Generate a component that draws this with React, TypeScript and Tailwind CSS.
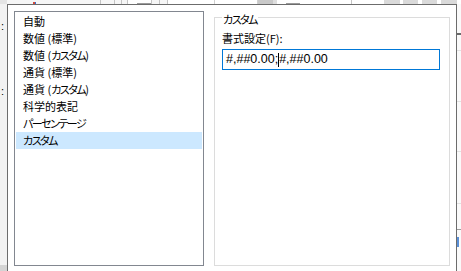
const jp = "font-['Noto_Sans_CJK_JP','Noto_Sans',sans-serif] [font-feature-settings:'palt']";

const items = [
  "自動",
  "数値 (標準)",
  "数値 (カスタム)",
  "通貨 (標準)",
  "通貨 (カスタム)",
  "科学的表記",
  "パーセンテージ",
  "カスタム",
];

// katakana in the original UI font is narrow, so tighten kana runs
function Jp({ text }: { text: string }) {
  const parts = text.split(/([\u30A0-\u30FF]+)/);
  return (
    <>
      {parts.map((p, i) =>
        /[\u30A0-\u30FF]/.test(p) ? (
          <span key={i} className="tracking-[-1.5px]">
            {p}
          </span>
        ) : (
          <span key={i}>{p}</span>
        )
      )}
    </>
  );
}

// spreadsheet cells peeking out above the dialog
const topCells: { w: number; cls: string }[] = [
  { w: 7, cls: "bg-[#e4e4e4]" },
  { w: 94, cls: "bg-[#f6f6f6] border-r border-[#c4c4c4]" },
  { w: 14, cls: "bg-[#f6f6f6] border-r border-[#c4c4c4]" },
  { w: 7, cls: "bg-[#f6f6f6] border-r border-[#c4c4c4]" },
  { w: 6, cls: "bg-[#f6f6f6] border-r border-[#c4c4c4]" },
  { w: 24, cls: "bg-white border-r border-[#c4c4c4]" },
  { w: 8, cls: "bg-[#f6f6f6] border-r border-[#c4c4c4]" },
  { w: 8, cls: "bg-[#f6f6f6] border-r border-[#c4c4c4]" },
  { w: 47, cls: "bg-white border-r border-[#d0d0d0]" },
  { w: 43, cls: "bg-white border-r border-[#d0d0d0]" },
  { w: 15, cls: "bg-[#c9c9c9]" },
  { w: 4, cls: "bg-[#dedede]" },
  { w: 75, cls: "bg-white border-r border-[#c4c4c4]" },
  { w: 32, cls: "bg-white" },
  { w: 16, cls: "bg-[#dadada]" },
  { w: 3, cls: "bg-white" },
  { w: 15, cls: "bg-[#dadada]" },
  { w: 4, cls: "bg-white" },
  { w: 15, cls: "bg-[#dadada]" },
  { w: 4, cls: "bg-white" },
  { w: 16, cls: "bg-[#dadada]" },
];

function TopStrip() {
  return (
    <div className="flex h-[4px] shrink-0">
      {topCells.map((c, i) => (
        <div key={i} className={`relative h-full shrink-0 ${c.cls}`} style={{ width: c.w }}>
          {i === 1 && (
            <div className="absolute bottom-0 left-[26px] flex">
              <div className="h-[2px] w-[2px] bg-[#d24b3a]" />
              <div className="h-[2px] w-px bg-[#3b6fd0]" />
            </div>
          )}
          {(i === 5 || i === 12) && (
            <div className="absolute bottom-0 left-[9px] h-px w-[14px] bg-[#9a9a9a]" />
          )}
        </div>
      ))}
    </div>
  );
}

function LeftStrip() {
  return (
    <div className="flex w-[7px] shrink-0 flex-col bg-[#f2f2f2]">
      <div className="mt-[16px] h-[12px] pl-px text-[11px] leading-[12px] text-black font-['Liberation_Sans',sans-serif]">:</div>
      <div className="mt-[53px] h-[12px] pl-px text-[11px] leading-[12px] text-black font-['Liberation_Sans',sans-serif]">:</div>
      <div className="mt-auto h-[6px] bg-[#d4d4d4]" />
    </div>
  );
}

function RightStrip() {
  return (
    <div className="flex w-[4px] shrink-0 flex-col bg-[#fafafa]">
      <div className="h-[29px]" />
      <div className="h-[2px] bg-[#6a6a6a]" />
      <div className="h-[16px] border-b border-[#e2e2e2]" />
      <div className="h-[51px] border-b border-[#e2e2e2]" />
      <div className="h-[50px] border-b border-[#e2e2e2]" />
      <div className="h-[52px] border-b border-[#e2e2e2]" />
      <div className="h-[26px] border-b border-[#9c9c9c]" />
      <div className="mt-[7px] h-[10px] w-[2px] bg-[#5a8fd6]" />
    </div>
  );
}

export default function App() {
  return (
    <div className={`flex h-[271px] w-[461px] flex-col overflow-hidden bg-white text-black ${jp}`}>
      <TopStrip />
      <div className="flex flex-1">
        <LeftStrip />

        {/* dialog */}
        <div className="flex w-[450px] shrink-0 items-start gap-[10px] border-l border-r border-t border-[#6c6c6c] bg-white pl-[6px] pt-[4px]">
          {/* category list */}
          <div className="mt-[2px] h-[255px] w-[190px] shrink-0 border border-[#828790] p-px">
            {items.map((t) => (
              <div
                key={t}
                className={`flex h-[17px] items-center whitespace-pre pl-[7px] text-[11px] leading-none ${
                  t === "カスタム" ? "bg-[#cce8ff]" : ""
                }`}
              >
                <Jp text={t} />
              </div>
            ))}
          </div>

          {/* custom format group */}
          <fieldset className="h-[257px] w-[236px] shrink-0 border border-[#dcdcdc] px-[7px]">
            <legend className="px-px pt-[4px] text-[11px] leading-[12px]">
              <Jp text="カスタム" />
            </legend>
            <div className="mt-[6px] text-[11px] leading-[14px]">書式設定(F):</div>
            <div className="mt-[4px] flex h-[21px] w-[218px] items-center border border-[#0078d7] pl-[3px] text-[12.5px] leading-none font-['Liberation_Sans',sans-serif]">
              <span>#,##0.00;</span>
              <span className="h-[14px] w-px bg-black" />
              <span>#,##0.00</span>
            </div>
          </fieldset>
        </div>

        <RightStrip />
      </div>
    </div>
  );
}
